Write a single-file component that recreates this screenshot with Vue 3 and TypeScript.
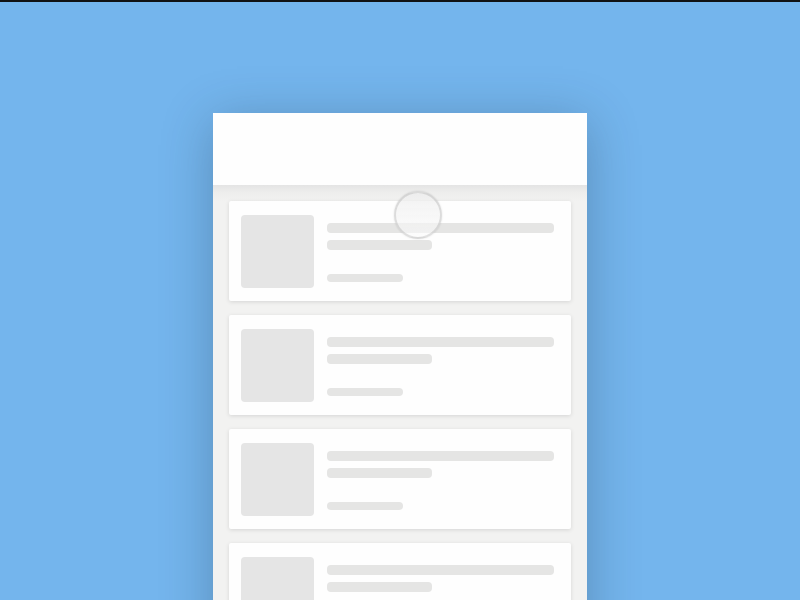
<script setup lang="ts">
interface PlaceholderCard {
  id: number
}

const cards: PlaceholderCard[] = Array.from({ length: 5 }, (_, index) => ({ id: index + 1 }))
</script>

<template>
  <main class="stage">
    <section class="screen">
      <header class="app-bar"></header>
      <ul class="feed">
        <li v-for="card in cards" :key="card.id" class="card">
          <div class="thumb"></div>
          <div class="lines">
            <div class="line title"></div>
            <div class="line subtitle"></div>
            <div class="line meta"></div>
          </div>
        </li>
      </ul>
      <div class="touch"></div>
    </section>
  </main>
</template>

<style>
body {
  margin: 0;
  background: #74b5ed;
}
</style>

<style scoped>
.stage {
  box-sizing: border-box;
  height: 100vh;
  padding: 111px 16px 0;
  border-top: 2px solid #111214;
  background: #74b5ed;
  overflow: hidden;
}

.screen {
  position: relative;
  max-width: 374px;
  margin: 0 auto;
  box-shadow: 0 8px 48px rgba(35, 55, 75, 0.32);
}

.app-bar {
  height: 72px;
  background: #fefefe;
}

.feed {
  display: flex;
  flex-direction: column;
  gap: 14px;
  margin: 0;
  padding: 16px;
  background: linear-gradient(#e4e4e4, #ededec 7px, #f2f2f1 16px);
  list-style: none;
}

.card {
  box-sizing: border-box;
  display: flex;
  gap: 13px;
  height: 100px;
  padding: 14px 17px 13px 12px;
  border-radius: 2px;
  background: #fefefe;
  box-shadow: 0 1px 4px rgba(0, 0, 0, 0.12);
}

.thumb {
  flex: none;
  width: 73px;
  height: 73px;
  border-radius: 4px;
  background: #e5e5e5;
}

.lines {
  flex: 1;
  display: flex;
  flex-direction: column;
  gap: 7px;
  padding: 8px 0 6px;
}

.line {
  height: 10px;
  border-radius: 4px;
  background: #e5e5e4;
}

.subtitle {
  width: 105px;
}

.meta {
  width: 76px;
  height: 8px;
  margin-top: auto;
}

/* Touch point lying over the list */
.touch {
  position: absolute;
  top: 78px;
  left: 181px;
  box-sizing: border-box;
  width: 48px;
  height: 48px;
  border: 2px solid rgba(110, 110, 110, 0.2);
  border-radius: 50%;
  background: linear-gradient(rgba(238, 238, 238, 0.75), rgba(250, 250, 250, 0.6));
  box-shadow: 0 0 2px rgba(0, 0, 0, 0.12);
}
</style>
